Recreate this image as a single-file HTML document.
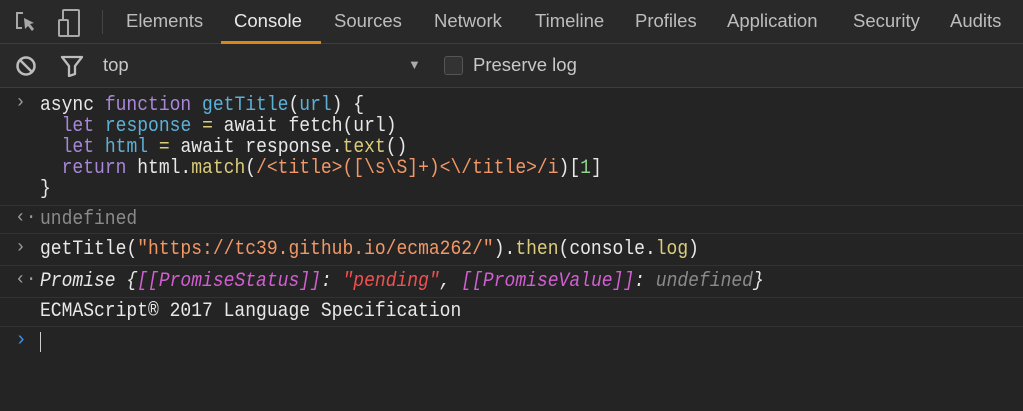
<!DOCTYPE html>
<html><head><meta charset="utf-8"><style>
body{margin:0;width:1023px;height:411px;background:#242424;overflow:hidden;font-family:"Liberation Sans",sans-serif;}
.tabs{position:absolute;left:0;top:0;width:1023px;height:43px;background:#292929;border-bottom:1px solid #3d3d3d;}
.tab{position:absolute;top:10px;font-size:18.5px;color:#bdbdbd;}
.tab.act{color:#e8e8e8}
.ul{position:absolute;left:221px;width:100px;top:41px;height:3px;background:#d6891a}
.tb{position:absolute;left:0;top:44px;width:1023px;height:43px;background:#292929;border-bottom:1px solid #3d3d3d;}
.mono{font-family:"Liberation Mono",monospace;font-size:20px;}
.row{position:absolute;left:0;width:1023px;border-bottom:1px solid #333;}
.l{position:absolute;left:40px;white-space:pre;color:#e8e8e8;line-height:21px;transform:scaleX(0.9);transform-origin:0 0}
.kw{color:#a887d9}.fn{color:#5db0d7}.str{color:#f29766}.me{color:#dbcc7a}.nm{color:#8fd48f}.gr{color:#8a8a8a}.pu{color:#d35ed3}.rd{color:#f2504f}
.gt{position:absolute;left:15px;color:#9a9a9a;font-size:18px}
</style></head><body>
<div class="tabs">
<svg style="position:absolute;left:14px;top:10px" width="24" height="24" viewBox="0 0 24 24"><path d="M9 3H3v15h5" fill="none" stroke="#a8a8a8" stroke-width="2"/><path d="M10 8l10 5-4 1 4 5-2 2-4-5-3 3z" fill="#a8a8a8"/></svg>
<svg style="position:absolute;left:56px;top:8px" width="28" height="30" viewBox="0 0 28 30"><rect x="7" y="2" width="16" height="26" rx="1" fill="none" stroke="#a8a8a8" stroke-width="2"/><rect x="3" y="12" width="9" height="16" rx="1" fill="#292929" stroke="#a8a8a8" stroke-width="2"/></svg>
<div style="position:absolute;left:102px;top:10px;width:1px;height:24px;background:#444"></div>
<span class="tab" style="left:126px">Elements</span>
<span class="tab act" style="left:234px">Console</span>
<span class="tab" style="left:334px">Sources</span>
<span class="tab" style="left:434px">Network</span>
<span class="tab" style="left:535px">Timeline</span>
<span class="tab" style="left:635px">Profiles</span>
<span class="tab" style="left:727px">Application</span>
<span class="tab" style="left:853px">Security</span>
<span class="tab" style="left:950px">Audits</span>
<div class="ul"></div>
</div>
<div class="tb">
<svg style="position:absolute;left:15px;top:11px" width="22" height="22" viewBox="0 0 22 22"><circle cx="11" cy="11" r="8.5" fill="none" stroke="#bdbdbd" stroke-width="2.5"/><path d="M5 5l12 12" stroke="#bdbdbd" stroke-width="2.5"/></svg>
<svg style="position:absolute;left:60px;top:11px" width="24" height="22" viewBox="0 0 24 22"><path d="M2 2h20l-7 9v8l-6 2V11z" fill="none" stroke="#bdbdbd" stroke-width="2.3" stroke-linejoin="round"/></svg>
<span style="position:absolute;left:103px;top:10px;font-size:18.5px;color:#c8c8c8">top</span>
<span style="position:absolute;left:408px;top:13px;font-size:13px;color:#aaa">▼</span>
<div style="position:absolute;left:444px;top:12px;width:17px;height:17px;border:1px solid #555;border-radius:3px;background:#333"></div>
<span style="position:absolute;left:473px;top:10px;font-size:18.5px;color:#c8c8c8">Preserve log</span>
</div>
<div class="mono">
<div class="row" style="top:88px;height:117px">
<span class="gt" style="top:5px">›</span>
<div class="l" style="top:7px">async <span class="kw">function</span> <span class="fn">getTitle</span>(<span class="fn">url</span>) {
  <span class="kw">let</span> <span class="fn">response</span> <span class="me">=</span> await fetch(url)
  <span class="kw">let</span> <span class="fn">html</span> <span class="me">=</span> await response.<span class="me">text</span>()
  <span class="kw">return</span> html.<span class="me">match</span>(<span class="str">/&lt;title&gt;([\s\S]+)&lt;\/title&gt;/i</span>)[<span class="nm">1</span>]
}</div>
</div>
<div class="row" style="top:206px;height:27px"><span class="gt" style="top:2px">‹·</span><div class="l gr" style="top:3px">undefined</div></div>
<div class="row" style="top:234px;height:31px"><span class="gt" style="top:4px">›</span><div class="l" style="top:5px">getTitle(<span class="str">"https://tc39.github.io/ecma262/"</span>).<span class="me">then</span>(console.<span class="me">log</span>)</div></div>
<div class="row" style="top:266px;height:31px"><span class="gt" style="top:4px">‹·</span><div class="l" style="top:5px;font-style:italic">Promise {<span class="pu">[[PromiseStatus]]</span>: <span class="rd">"pending"</span>, <span class="pu">[[PromiseValue]]</span>: <span class="gr">undefined</span>}</div></div>
<div class="row" style="top:298px;height:28px"><div class="l" style="top:3px">ECMAScript® 2017 Language Specification</div></div>
<span class="gt" style="top:329px;color:#3d8ee8;font-size:20px">›</span>
<div style="position:absolute;left:40px;top:332px;width:1px;height:20px;background:#ccc"></div>
</div>
</body></html>
